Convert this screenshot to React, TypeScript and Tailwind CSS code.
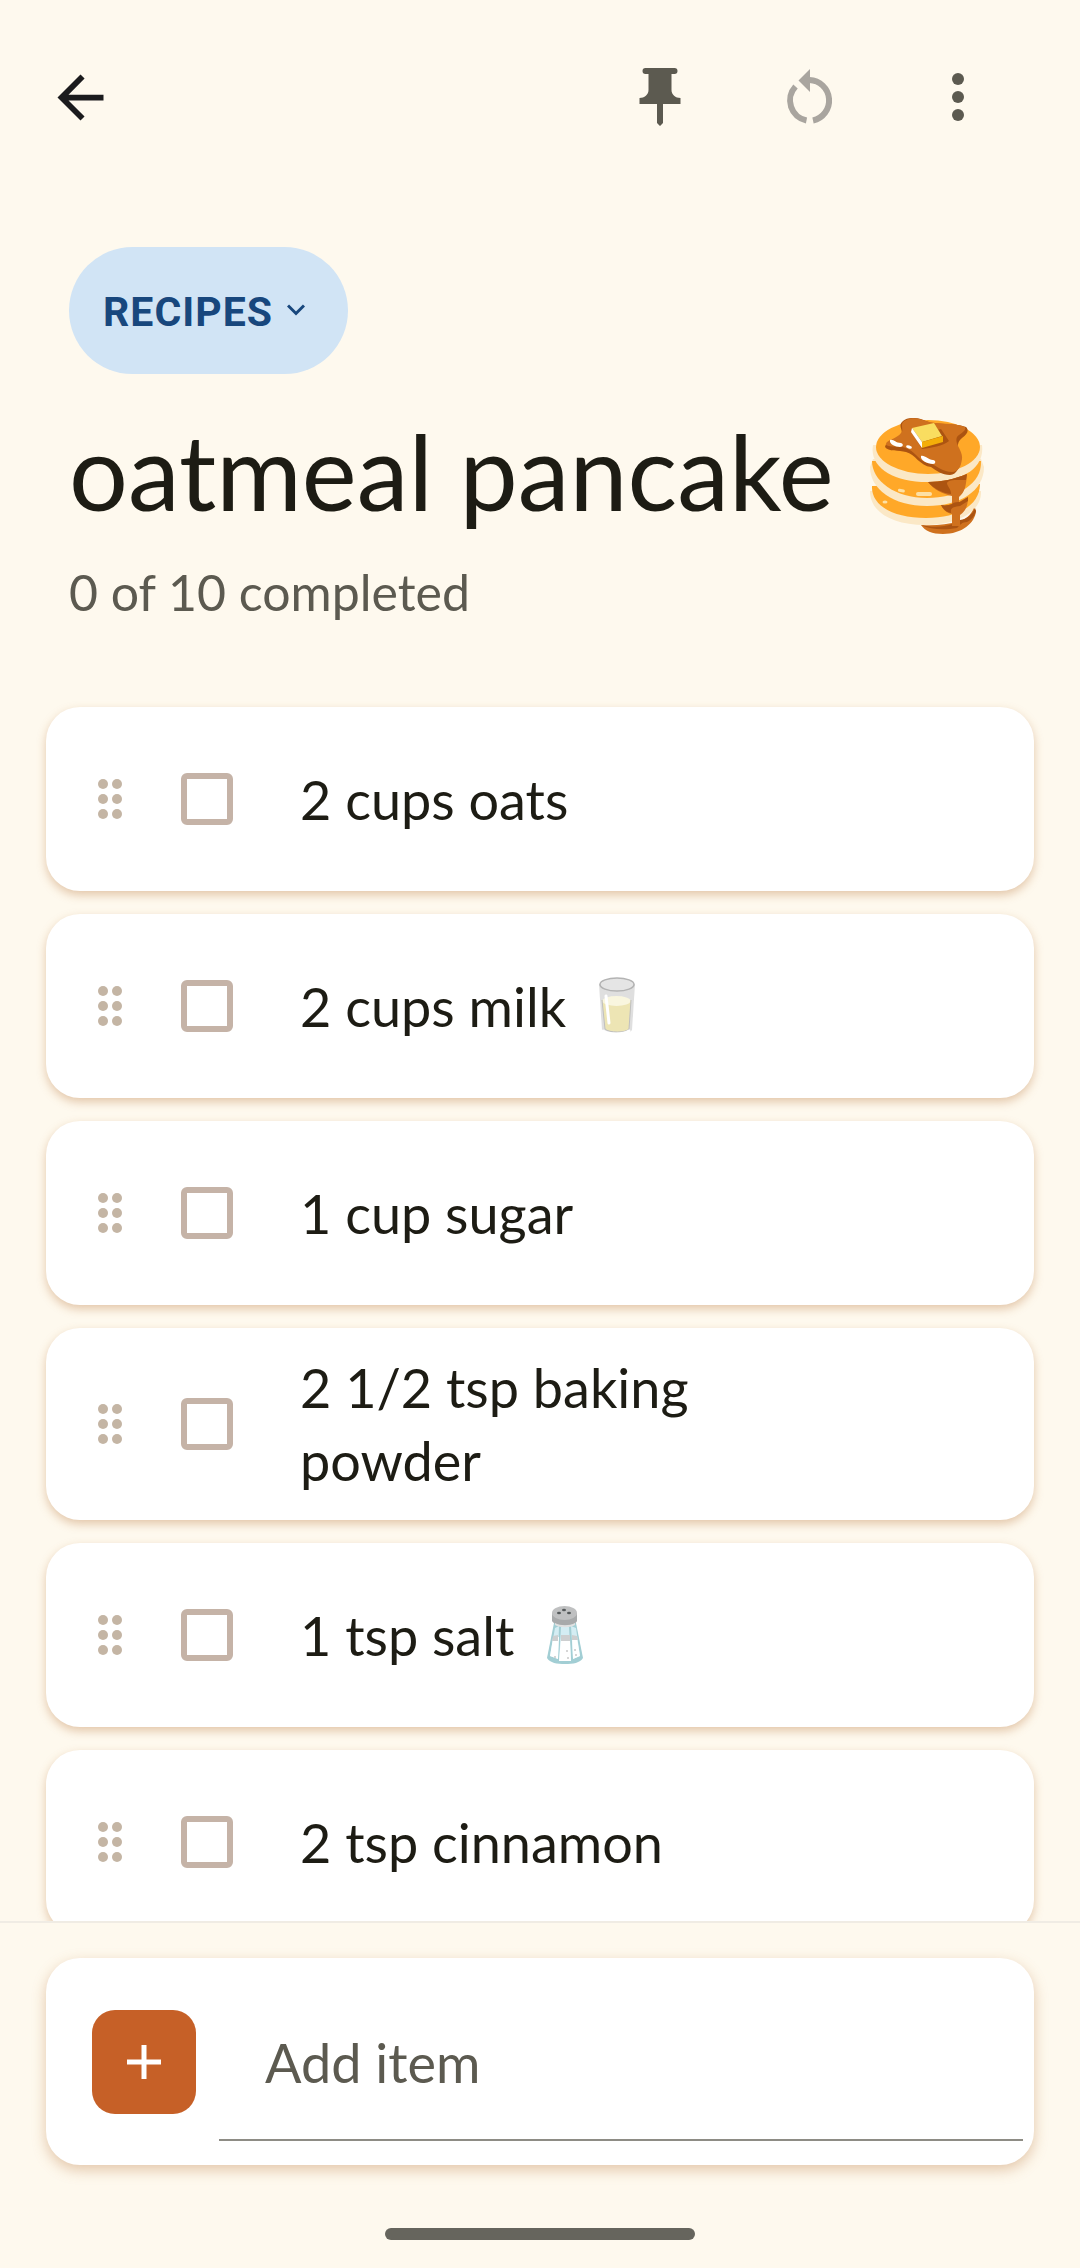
import React, { useState } from "react";

function BackIcon() {
  return (
    <svg viewBox="0 0 24 24" className="size-[69px]" fill="currentColor" aria-hidden="true">
      <path d="M20 11H7.83l5.59-5.59L12 4l-8 8 8 8 1.41-1.41L7.83 13H20v-2z" />
    </svg>
  );
}

function PinIcon() {
  return (
    <svg viewBox="0 0 42 60" className="h-[60px] w-[42px]" fill="currentColor" aria-hidden="true">
      <path d="M6.500 0h29a3 3 0 0 1 0 6H32.500v16c0 4.500 4 8 9 8v6H24v19l-3 3-3-3V36H.500v-6c5 0 9-3.500 9-8V6H6.500a3 3 0 0 1 0-6z" />
    </svg>
  );
}

function ResetIcon() {
  return (
    <svg viewBox="0 0 48 60" className="h-[60px] w-[48px]" aria-hidden="true">
      <g fill="none" stroke="currentColor" strokeWidth="6">
        <path d="M23.500 12A20.500 20.500 0 0 1 27 52.500" />
        <path d="M9.500 18.500A20.500 20.500 0 0 0 20.500 52.500" />
      </g>
      <path d="M24 1v23L12.500 12.500z" fill="currentColor" />
    </svg>
  );
}

function MoreIcon() {
  return (
    <svg viewBox="0 0 12 50" className="h-[50px] w-[12px]" fill="currentColor" aria-hidden="true">
      <circle cx="6" cy="6" r="6" />
      <circle cx="6" cy="24" r="6" />
      <circle cx="6" cy="42" r="6" />
    </svg>
  );
}

function GripIcon() {
  return (
    <svg viewBox="0 0 24 40" className="h-[40px] w-[24px]" fill="#c4b5a4" aria-hidden="true">
      {[5, 20, 35].map((y) => (
        <g key={y}>
          <circle cx="5" cy={y} r="5" />
          <circle cx="19" cy={y} r="5" />
        </g>
      ))}
    </svg>
  );
}

function Pancakes() {
  return (
    <svg viewBox="0 0 114 116" className="h-[116px] w-[114px] shrink-0" role="img" aria-label="pancakes">
      <path d="M0 73C0 94 22 107 55 107c32 0 57-13 56-34z" fill="#fbe8c6" />
      <path d="M2 68c-1 19 20 32 54 32 32 0 54-13 54-34z" fill="#ffa828" />
      <path d="M0 49c0 22 23 39 57 39 33 0 57-15 57-39l-3-8H3z" fill="#fbe8c6" />
      <path d="M2 43c0 20 23 37 55 37 31 0 55-14 54-37z" fill="#ffa828" />
      <path d="M3 27c-4 22 20 37 54 37 33 0 58-12 55-37z" fill="#fbe8c6" />
      <ellipse cx="58" cy="29" rx="52" ry="27" fill="#ffa828" />
      <path d="M51 107c4 6 11 9 22 9 19 0 32-11 33-23l-2-3c-3 7-9 12-14 13-14 4-27 5-39 4z" fill="#cf711e" />
      <path d="M51 107c12 3 23 2 31-1l1-9 7 5c7-1 12-5 15-12l1 3c-1 5-5 9-9 11-5 0-7 3-10 6-12 2-26 2-36-3z" fill="#ac5411" />
      <path d="M58 64c13 0 27-3 39-8-1 12-2 18-8 23v5l9-5c0 8-2 14-8 18v11h-8V96c-5-1-9-4-11-9 5 1 8 0 11-1v-8c-9-2-18-6-24-14z" fill="#cf711e" />
      <path d="M58 64c13 0 27-3 39-8l-1 6c-7 0-18-1-19 3 0 3 4 6 4 11-9-1-17-5-23-12zM71 87c4 1 8 0 11-1 2-2 6-2 8-2l8-5v4l-8 5c-7 1-10 2-9 7-5-1-8-4-10-8z" fill="#ac5411" />
      <path d="M33 3c6-5 17-3 23 0 10 5 27 1 40 6 3 3 2 7-4 11-8 7-2 13-2 22 0 6-3 15-10 15-8 0-13-4-19-8-11-1-16-13-25-15-7-2-18 0-21-5 1-7 12-6 16-12C34 12 27 8 33 3z" fill="#ac5411" />
      <path d="M36 2c6-3 13-2 20 1 12 4 27 1 39 6 2 4-6 7-8 10-3 7 6 13 5 22-1 8-4 13-10 13-9 0-15-6-22-9-10 0-13-10-22-14-7-4-18-1-22-4-1-5 11-6 15-12C35 11 28 6 36 2z" fill="#cf711e" />
      <path d="M71 11l8 12c-6 5-18 7-27 8L44 18z" fill="#ac5411" />
      <path d="M42 10l22-5 8 13-20 6z" fill="#f9dd60" />
      <path d="M52 24l21-6v6l-21 6z" fill="#f4ae09" />
      <path d="M42 10l10 14v6L41 14z" fill="#fff" />
      <path d="M20 22c4-1 5 3 11 3 3 1 2 4-1 4-5 0-11-3-10-7zM51 38c4-1 7 4 12 4 3 0 3 4 0 4-6 0-13-4-12-8z" fill="#fff" />
      <ellipse cx="39" cy="29" rx="3" ry="1.500" fill="#fff" transform="rotate(15 39 29)" />
      <g fill="#fde0a4">
        <rect x="28" y="71" width="7" height="3" rx="1.500" transform="rotate(10 31 72)" />
        <rect x="46" y="74" width="16" height="4" rx="2" />
        <ellipse cx="15" cy="84" rx="2.500" ry="1.500" />
      </g>
    </svg>
  );
}

function Milk() {
  return (
    <svg viewBox="0 0 36 58" className="h-[58px] w-[36px]" role="img" aria-label="glass of milk">
      <path d="M0 7l3 46c3 6 26 6 30 0l3-46z" fill="#dfdfdf" />
      <path d="M3 23l3 29c4 4 21 4 24 0l2-29z" fill="#ede5b4" />
      <ellipse cx="17.500" cy="24" rx="14" ry="5" fill="#f9f6df" />
      <path d="M3 23l3 29c4 4 21 4 24 0l2-29" fill="none" stroke="#bfbfbf" />
      <ellipse cx="18" cy="7.500" rx="17" ry="6.500" fill="#e5e5e5" stroke="#b3b3b3" strokeWidth="1.500" />
      <path d="M7 19l3 27M4 54c6 4 20 4 26 0" fill="none" stroke="#fff" strokeWidth="3" strokeLinecap="round" />
    </svg>
  );
}

function Salt() {
  return (
    <svg viewBox="0 0 36 60" className="h-[60px] w-[36px]" role="img" aria-label="salt">
      <path d="M7 18h22l7 35c-3 5-10 6-18 6S3 58 0 53z" fill="#a2ced4" />
      <path d="M8 23l4-2-1 33-8-3zM14 22h8l2 34H12zM24 21l5 2 4 28-7 3z" fill="#d4edf3" />
      <path d="M6 33l6-1-1 22-8-3zM14 33h9l1 23H12zM25 32l5 1 3 18-7 3z" fill="#fff" />
      <path d="M6 31l5-1v6H5zM14 30h9v6h-9zM25 30l5 1 1 4h-6z" fill="#cdcfd0" />
      <path d="M5 8v8c3 6 23 6 25 0V8z" fill="#a8aaab" />
      <path d="M8 18c5 3 15 3 20 0v2c-5 3-15 3-20 0z" fill="#e1e1e1" />
      <ellipse cx="17.500" cy="8" rx="12.500" ry="7" fill="#bfc0c1" />
      <g fill="#55595b">
        <ellipse cx="12" cy="8" rx="2" ry="1.300" />
        <ellipse cx="17" cy="5" rx="2" ry="1.300" />
        <ellipse cx="22" cy="8" rx="2" ry="1.300" />
      </g>
      <g fill="#c8c8c8">
        <circle cx="8" cy="52" r="1" />
        <circle cx="20" cy="46" r="1" />
        <circle cx="21" cy="53" r="1" />
        <circle cx="28" cy="45" r="1" />
        <circle cx="29" cy="50" r="1" />
      </g>
    </svg>
  );
}

type Item = { id: string; text: string; icon?: React.ReactNode };

const items: Item[] = [
  { id: "oats", text: "2 cups oats" },
  { id: "milk", text: "2 cups milk", icon: <Milk /> },
  { id: "sugar", text: "1 cup sugar" },
  { id: "powder", text: "2 1/2 tsp baking powder" },
  { id: "salt", text: "1 tsp salt", icon: <Salt /> },
  { id: "cinnamon", text: "2 tsp cinnamon" },
];

function ItemRow({ item }: { item: Item }) {
  const [done, setDone] = useState(false);
  return (
    <li className="flex min-h-[184px] shrink-0 items-center rounded-[34px] bg-white py-[23px] pl-[52px] pr-[200px] shadow-[0_4px_10px_rgba(180,110,50,0.36)]">
      <button type="button" aria-label={"Reorder " + item.text} className="mr-[59px] shrink-0">
        <GripIcon />
      </button>
      <input
        id={item.id}
        type="checkbox"
        checked={done}
        onChange={(e) => setDone(e.target.checked)}
        className="mr-[67px] size-[52px] shrink-0 appearance-none rounded-[6px] border-6 border-[#c5b3a7] checked:bg-[#c5b3a7]"
      />
      <label htmlFor={item.id} className="flex max-w-[480px] items-center gap-[33px] text-[54px] leading-[73px]">
        {item.text}
        {item.icon}
      </label>
    </li>
  );
}

export default function App() {
  return (
    <div className="flex h-screen flex-col bg-[#fef9ee] font-['Lato',sans-serif] text-[#1d1c14]">
      <header className="flex h-[195px] shrink-0 items-center pl-[46px] pr-[116px] text-[#5c5a50]">
        <button type="button" aria-label="Back" className="mr-auto text-[#1b1b1d]">
          <BackIcon />
        </button>
        <div className="flex items-center gap-[105px]">
          <button type="button" aria-label="Pin">
            <PinIcon />
          </button>
          <button type="button" aria-label="Uncheck all" disabled className="text-[#a9a59f]">
            <ResetIcon />
          </button>
          <button type="button" aria-label="More options" className="ml-[13px]">
            <MoreIcon />
          </button>
        </div>
      </header>

      <main className="flex min-h-0 flex-1 flex-col overflow-y-auto pt-[52px] [scrollbar-width:none]">
        <div className="shrink-0 px-[69px]">
          <button
            type="button"
            className="flex h-[127px] items-center gap-[14px] rounded-full bg-[#d1e4f5] pl-[34px] pr-[43px] pt-[4px] font-['Roboto',sans-serif] text-[41px] font-bold tracking-wide text-[#18477d]"
          >
            RECIPES
            <svg viewBox="0 0 18 18" className="size-[18px]" fill="none" stroke="currentColor" strokeWidth="3" aria-hidden="true">
              <path d="M1 1.500l8 8 8-8" />
            </svg>
          </button>
          <div className="mt-[34px] flex items-center gap-[36px]">
            <h1 className="text-[104px] leading-[126px]">oatmeal pancake</h1>
            <div className="pt-[10px]">
              <Pancakes />
            </div>
          </div>
          <p className="mt-[25px] text-[50px] leading-[66px] text-[#5c5a50]">0 of 10 completed</p>
        </div>
        <ul className="mt-[82px] flex flex-col gap-[23px] px-[46px]">
          {items.map((item) => (
            <ItemRow key={item.id} item={item} />
          ))}
        </ul>
      </main>

      <footer className="shrink-0 border-t-2 border-[#f0ece4] px-[46px] pt-[35px]">
        <div className="flex h-[207px] items-center rounded-[34px] bg-white pl-[46px] pr-[11px] shadow-[0_5px_14px_rgba(180,110,50,0.36)]">
          <button type="button" aria-label="Add" className="grid size-[104px] shrink-0 place-items-center rounded-[23px] bg-[#c66027]">
            <svg viewBox="0 0 34 34" className="size-[34px]" stroke="#fff" strokeWidth="5" aria-hidden="true">
              <path d="M17 0v34M0 17h34" />
            </svg>
          </button>
          <input
            type="text"
            aria-label="Add item"
            placeholder="Add item"
            className="ml-[23px] h-[158px] min-w-0 flex-1 border-b-2 border-[#8e8c85] px-[46px] pt-[4px] text-[54px] outline-none placeholder:text-[#5c5a50] placeholder:opacity-100"
          />
        </div>
        <div className="mx-auto mb-[28px] mt-[63px] h-[12px] w-[310px] rounded-full bg-[#66655d]" />
      </footer>
    </div>
  );
}
